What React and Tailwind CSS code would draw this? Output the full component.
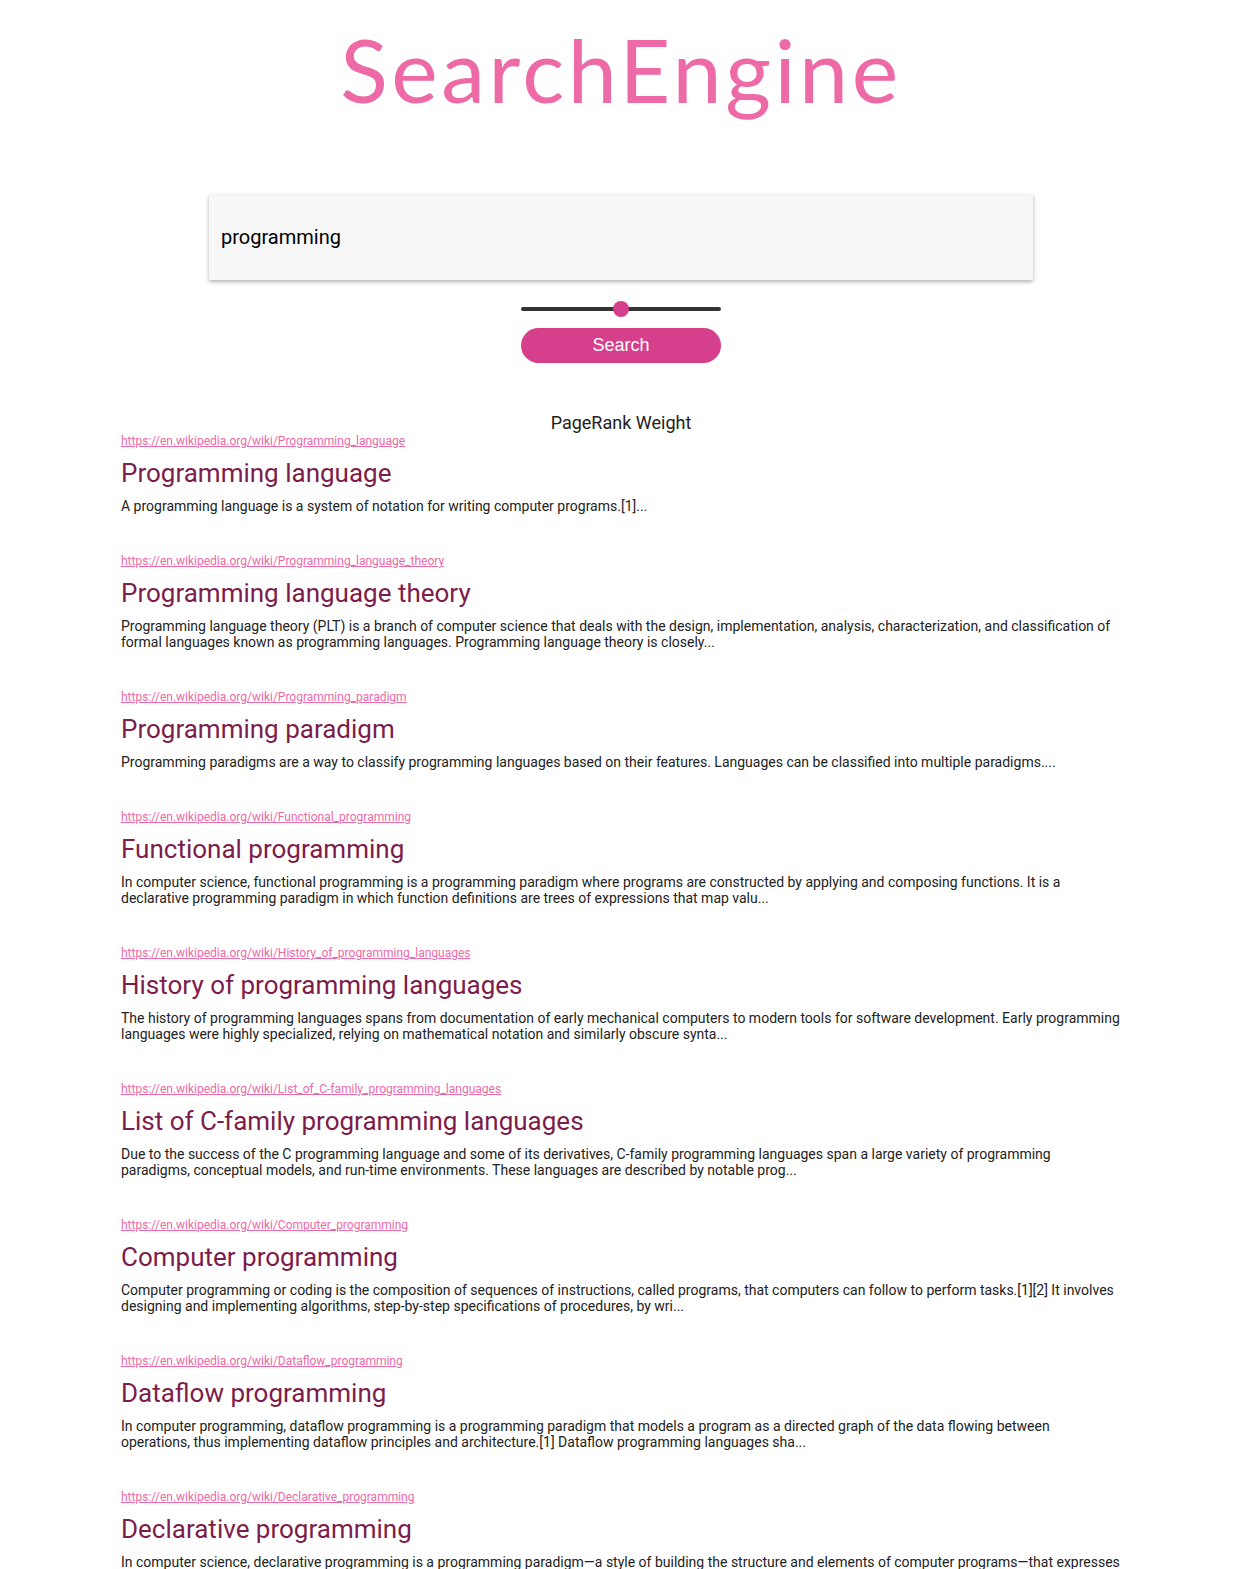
import React from "react";

const results = [
  {
    url: "https://en.wikipedia.org/wiki/Programming_language",
    title: "Programming language",
    desc: "A programming language is a system of notation for writing computer programs.[1]...",
  },
  {
    url: "https://en.wikipedia.org/wiki/Programming_language_theory",
    title: "Programming language theory",
    desc: "Programming language theory (PLT) is a branch of computer science that deals with the design, implementation, analysis, characterization, and classification of formal languages known as programming languages. Programming language theory is closely...",
  },
  {
    url: "https://en.wikipedia.org/wiki/Programming_paradigm",
    title: "Programming paradigm",
    desc: "Programming paradigms are a way to classify programming languages based on their features. Languages can be classified into multiple paradigms....",
  },
  {
    url: "https://en.wikipedia.org/wiki/Functional_programming",
    title: "Functional programming",
    desc: "In computer science, functional programming is a programming paradigm where programs are constructed by applying and composing functions. It is a declarative programming paradigm in which function definitions are trees of expressions that map valu...",
  },
  {
    url: "https://en.wikipedia.org/wiki/History_of_programming_languages",
    title: "History of programming languages",
    desc: "The history of programming languages spans from documentation of early mechanical computers to modern tools for software development. Early programming languages were highly specialized, relying on mathematical notation and similarly obscure synta...",
  },
  {
    url: "https://en.wikipedia.org/wiki/List_of_C-family_programming_languages",
    title: "List of C-family programming languages",
    desc: "Due to the success of the C programming language and some of its derivatives, C-family programming languages span a large variety of programming paradigms, conceptual models, and run-time environments. These languages are described by notable prog...",
  },
  {
    url: "https://en.wikipedia.org/wiki/Computer_programming",
    title: "Computer programming",
    desc: "Computer programming or coding is the composition of sequences of instructions, called programs, that computers can follow to perform tasks.[1][2] It involves designing and implementing algorithms, step-by-step specifications of procedures, by wri...",
  },
  {
    url: "https://en.wikipedia.org/wiki/Dataflow_programming",
    title: "Dataflow programming",
    desc: "In computer programming, dataflow programming is a programming paradigm that models a program as a directed graph of the data flowing between operations, thus implementing dataflow principles and architecture.[1] Dataflow programming languages sha...",
  },
  {
    url: "https://en.wikipedia.org/wiki/Declarative_programming",
    title: "Declarative programming",
    desc: "In computer science, declarative programming is a programming paradigm\u2014a style of building the structure and elements of computer programs\u2014that expresses the logic of a computation without describing its control flow....",
  },
];

export default function App() {
  return (
    <div className="min-h-screen bg-white font-['Roboto',sans-serif] text-[#222]">
      {/* header */}
      <h1 className="pt-[15px] text-center font-['Lato',sans-serif] text-[88px] leading-[108px] font-normal tracking-[3.5px] text-[#ee6aa7]">
        SearchEngine
      </h1>

      {/* search form */}
      <div className="mt-[71px] flex flex-col items-center">
        <div className="w-[824px] h-[86px] bg-[#f7f7f7] shadow-[0_2px_4px_rgba(0,0,0,0.3)] flex items-center px-3">
          <span className="text-[20px] text-black">programming</span>
        </div>
        <div className="relative mt-[27px] w-[200px] h-[4px] rounded-full bg-[#333]">
          <div className="absolute left-1/2 top-1/2 -translate-x-1/2 -translate-y-1/2 w-[16px] h-[16px] rounded-full bg-[#d63f8c]" />
        </div>
        <button className="mt-[17px] w-[200px] h-[35px] rounded-full bg-[#d63f8c] text-white text-[18px] font-['Liberation_Sans',sans-serif]">
          Search
        </button>
        <div className="mt-[51px] text-[18px] leading-[18px] text-[#222]">PageRank Weight</div>
      </div>

      {/* results */}
      <div className="mx-auto mt-[1px] w-[1000px]">
        {results.map((r, i) => (
          <div key={i} className="mb-[39px]">
            <a href={r.url} className="block text-[12px] leading-[16px] text-[#ee6aa7] underline">
              {r.url}
            </a>
            <h2 className="mt-[8px] text-[26px] leading-[32px] text-[#7c1d4b]">{r.title}</h2>
            <p className="mt-[9px] text-[14px] leading-[16px] text-[#222]">{r.desc}</p>
          </div>
        ))}
      </div>
    </div>
  );
}
